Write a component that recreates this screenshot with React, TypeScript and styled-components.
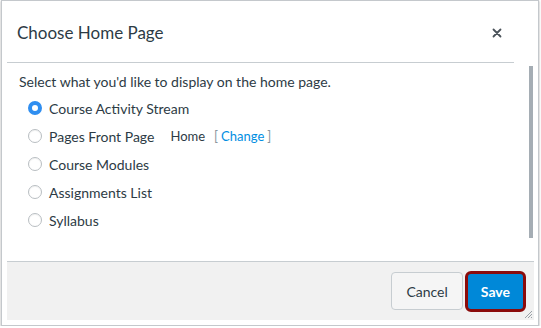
import styled, { createGlobalStyle } from 'styled-components';

const GlobalStyle = createGlobalStyle`
  body {
    margin: 0;
    background: #ffffff;
    font-family: Lato, "Helvetica Neue", Arial, sans-serif;
    color: #2d3b45;
  }
`;

const Dialog = styled.div`
  box-sizing: border-box;
  width: 538px;
  height: 326px;
  margin-left: 1px;
  border: 1px solid #c4c8cc;
  box-shadow: 0 1px 2px rgba(0, 0, 0, 0.35);
  background: #ffffff;
  padding: 0 4px 5px 5px;
  display: flex;
  flex-direction: column;
`;

const Header = styled.div`
  height: 61px;
  margin-right: 20px;
  border-bottom: 1px solid #c7cdd1;
  display: flex;
  align-items: center;
  justify-content: space-between;
  padding: 0 0 0 10px;
`;

const Title = styled.h1`
  margin: 0;
  font-size: 17px;
  font-weight: 400;
  color: #2d3b45;
  padding-top: 1px;
`;

const CloseButton = styled.button`
  border: none;
  background: none;
  padding: 0;
  width: 10px;
  height: 10px;
  margin-right: 12px;
  margin-top: 2px;
  display: flex;
  cursor: pointer;
`;

const BodyRow = styled.div`
  flex: 1;
  display: flex;
`;

const Content = styled.div`
  flex: 1;
  padding: 10px 12px 0 12px;
  font-size: 14px;
`;

const Intro = styled.p`
  margin: 0 0 3px;
  line-height: 18px;
`;

const OptionList = styled.div`
  display: flex;
  flex-direction: column;
  padding-left: 9px;
`;

const Option = styled.label`
  height: 28px;
  display: flex;
  align-items: center;
  font-size: 14px;
  color: #2d3b45;
`;

const Radio = styled.span<{ $checked?: boolean }>`
  box-sizing: border-box;
  width: 14px;
  height: 14px;
  border-radius: 50%;
  margin-right: 7px;
  border: ${(p) => (p.$checked ? '4px solid #2f8ef0' : '1px solid #b9bec2')};
  background: #ffffff;
  box-shadow: ${(p) => (p.$checked ? 'none' : 'inset 0 1px 1px rgba(0,0,0,0.06)')};
`;

const PageName = styled.span`
  margin-left: 16px;
  font-size: 13px;
`;

const Bracket = styled.span`
  margin-left: 9px;
  font-size: 13px;
  color: #8b969e;
`;

const ChangeLink = styled.a`
  color: #008ee2;
  text-decoration: none;
  margin: 0 3px;
`;

const ScrollTrack = styled.div`
  width: 4px;
  margin-right: 1px;
  padding-top: 3px;
  padding-bottom: 23px;
  display: flex;
`;

const ScrollThumb = styled.div`
  flex: 1;
  background: #a5adb4;
`;

const Footer = styled.div`
  height: 58px;
  border-top: 1px solid #c7cdd1;
  background: #f1f1f1;
  display: flex;
  align-items: center;
  justify-content: flex-end;
  gap: 2px;
  padding-right: 8px;
  position: relative;
`;

const Button = styled.button<{ $primary?: boolean }>`
  box-sizing: border-box;
  height: ${(p) => (p.$primary ? '41px' : '38px')};
  padding: ${(p) => (p.$primary ? '0 13px' : '0 14px')};
  border-radius: ${(p) => (p.$primary ? '6px' : '4px')};
  font-family: Lato, Arial, sans-serif;
  font-size: 14px;
  cursor: pointer;
  background: ${(p) => (p.$primary ? '#0088d8' : '#f5f5f5')};
  color: ${(p) => (p.$primary ? '#ffffff' : '#2d3b45')};
  border: ${(p) => (p.$primary ? '3px solid #8b0b0b' : '1px solid #c7cdd1')};
  font-weight: ${(p) => (p.$primary ? 700 : 400)};
`;

const Grip = styled.svg`
  position: absolute;
  right: 1px;
  bottom: 1px;
`;

const options = [
  { label: 'Course Activity Stream', checked: true },
  { label: 'Pages Front Page', front: true },
  { label: 'Course Modules' },
  { label: 'Assignments List' },
  { label: 'Syllabus' },
];

const App = () => (
  <>
    <GlobalStyle />
    <Dialog>
      <Header>
        <Title>Choose Home Page</Title>
        <CloseButton aria-label="Close">
          <svg width="10" height="10" viewBox="0 0 10 10">
            <path d="M1.5 1.5 L8.5 8.5 M8.5 1.5 L1.5 8.5" stroke="#4a5259" strokeWidth="1.8" strokeLinecap="round" />
          </svg>
        </CloseButton>
      </Header>
      <BodyRow>
        <Content>
          <Intro>Select what you'd like to display on the home page.</Intro>
          <OptionList>
            {options.map((o) => (
              <Option key={o.label}>
                <Radio $checked={o.checked} />
                {o.label}
                {o.front && (
                  <>
                    <PageName>Home</PageName>
                    <Bracket>
                      [<ChangeLink href="#">Change</ChangeLink>]
                    </Bracket>
                  </>
                )}
              </Option>
            ))}
          </OptionList>
        </Content>
        <ScrollTrack>
          <ScrollThumb />
        </ScrollTrack>
      </BodyRow>
      <Footer>
        <Button>Cancel</Button>
        <Button $primary>Save</Button>
        <Grip width="10" height="10" viewBox="0 0 10 10">
          <path d="M9 2 L2 9 M9 5 L5 9 M9 8 L8 9" stroke="#9aa1a7" strokeWidth="1" />
        </Grip>
      </Footer>
    </Dialog>
  </>
);

export default App;
